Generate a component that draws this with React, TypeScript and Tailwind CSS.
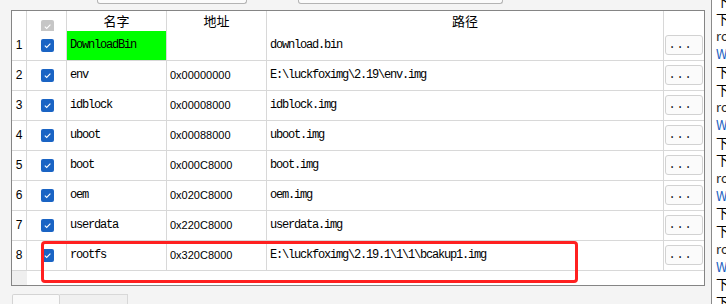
import React from "react";

type Row = { n: number; name: string; addr: string; path: string; green?: boolean };

const rows: Row[] = [
  { n: 1, name: "DownloadBin", addr: "", path: "download.bin", green: true },
  { n: 2, name: "env", addr: "0x00000000", path: "E:\\luckfoximg\\2.19\\env.img" },
  { n: 3, name: "idblock", addr: "0x00008000", path: "idblock.img" },
  { n: 4, name: "uboot", addr: "0x00088000", path: "uboot.img" },
  { n: 5, name: "boot", addr: "0x000C8000", path: "boot.img" },
  { n: 6, name: "oem", addr: "0x020C8000", path: "oem.img" },
  { n: 7, name: "userdata", addr: "0x220C8000", path: "userdata.img" },
  { n: 8, name: "rootfs", addr: "0x320C8000", path: "E:\\luckfoximg\\2.19.1\\1\\1\\bcakup1.img" },
];

const logLines: { t: string; c: string }[] = [];
for (let i = 0; i < 5; i++) {
  logLines.push({ t: "下载 rootfs.img 成功", c: "text-black" });
  logLines.push({ t: "下载 0x320C8000 完成", c: "text-black" });
  logLines.push({ t: "rootfs: download ok", c: "text-[#2b2b2b]" });
  logLines.push({ t: "Write partition ok", c: "text-[#1d5fc2]" });
}

function Check({ gray }: { gray?: boolean }) {
  return (
    <div
      className={
        "w-[13px] h-[13px] rounded-[2px] flex items-center justify-center shrink-0 " +
        (gray ? "bg-[#c6c6c6]" : "bg-[#1a64c4]")
      }
    >
      <svg width="13" height="13" viewBox="0 0 13 13">
        <polyline points="3.8,6.6 5.7,8.4 9.4,4.6" fill="none" stroke="white" strokeWidth="1.1" />
      </svg>
    </div>
  );
}

export default function App() {
  return (
    <div className="relative w-[726px] h-[304px] overflow-hidden bg-[#f4f4f4] flex">
      {/* left area */}
      <div className="w-[711px] shrink-0 flex flex-col">
        {/* top partially visible controls */}
        <div className="h-[10px] flex items-start">
          <div className="ml-[97px] w-[150px] h-[4px] border border-t-0 border-[#b4b4b4] rounded-b-[3px] bg-[#fbfbfb]" />
          <div className="ml-[51px] w-[205px] h-[4px] border border-t-0 border-[#b4b4b4] rounded-b-[3px] bg-[#fbfbfb]" />
        </div>

        {/* table */}
        <div className="ml-[11px] w-[694px] h-[281px] border border-[#858585] bg-white flex flex-col">
          {/* header */}
          <div className="h-[20px] flex shrink-0 font-['Noto_Sans_CJK_SC',sans-serif] text-[13px] text-black leading-[20px]">
            <div className="w-[15px] border-r border-[#d8d8d8]" />
            <div className="w-[40px] border-r border-[#d8d8d8] overflow-hidden flex justify-center">
              <div className="mt-[9px] ml-[1px]">
                <Check gray />
              </div>
            </div>
            <div className="w-[100px] border-r border-[#d8d8d8] text-center pt-[0px]">名字</div>
            <div className="w-[100px] border-r border-[#d8d8d8] text-center">地址</div>
            <div className="w-[397px] border-r border-[#d8d8d8] text-center">路径</div>
            <div className="flex-1" />
          </div>

          {rows.map((r) => (
            <div key={r.n} className="h-[30px] flex shrink-0 border-b border-[#d8d8d8]">
              <div className="w-[15px] border-r border-[#d8d8d8] flex items-center justify-center font-['Liberation_Sans',sans-serif] text-[12px] text-black">
                {r.n}
              </div>
              <div className="w-[40px] border-r border-[#d8d8d8] flex items-center justify-center">
                <div className="ml-[1px]">
                  <Check />
                </div>
              </div>
              <div
                className={
                  "w-[100px] border-r border-[#d8d8d8] flex items-center pl-[3px] font-['Liberation_Mono',monospace] text-[12px] tracking-[-1.2px] text-black " +
                  (r.green ? "bg-[#00ff00]" : "")
                }
              >
                {r.name}
              </div>
              <div className="w-[100px] border-r border-[#d8d8d8] flex items-center pl-[3px] font-['Liberation_Sans',sans-serif] text-[11px] text-black">
                {r.addr}
              </div>
              <div className="w-[397px] border-r border-[#d8d8d8] flex items-center pl-[3px] font-['Liberation_Mono',monospace] text-[12px] tracking-[-1.2px] text-black whitespace-pre">
                {r.path}
              </div>
              <div className="flex-1 flex items-center pl-[1px] pr-[1px]">
                <div className="w-[38px] h-[20px] rounded-[3px] border border-[#d2d2d2] bg-[#fbfbfb] flex items-center justify-center pr-[7px] font-['Liberation_Mono',monospace] text-[12px] tracking-[0.8px] text-[#222]">
                  ...
                </div>
              </div>
            </div>
          ))}

          <div className="flex-1 flex">
            <div className="w-[15px] bg-[#efefef]" />
          </div>
        </div>

        {/* bottom tabs */}
        <div className="mt-[8px] flex ml-[12px]">
          <div className="w-[48px] h-[10px] border border-b-0 border-[#d4d4d4] bg-[#fafafa] rounded-t-[2px]" />
          <div className="w-[68px] h-[10px] border border-b-0 border-l-0 border-[#d8d8d8] bg-[#f0f0f0]" />
        </div>
      </div>

      {/* right log panel */}
      <div className="flex-1 bg-white border-l border-[#8a8a8a] overflow-hidden pl-[4px]">
        <div className="-mt-[8px] font-['Noto_Sans_CJK_SC',sans-serif] text-[13px] leading-[17.7px] whitespace-nowrap">
          {logLines.map((l, i) => (
            <div key={i} className={l.c}>
              {l.t}
            </div>
          ))}
        </div>
      </div>

      {/* red annotation */}
      <div className="absolute left-[41px] top-[241px] w-[537px] h-[42px] border-[3px] border-[#ff2020] rounded-[4px] pointer-events-none" />
    </div>
  );
}
